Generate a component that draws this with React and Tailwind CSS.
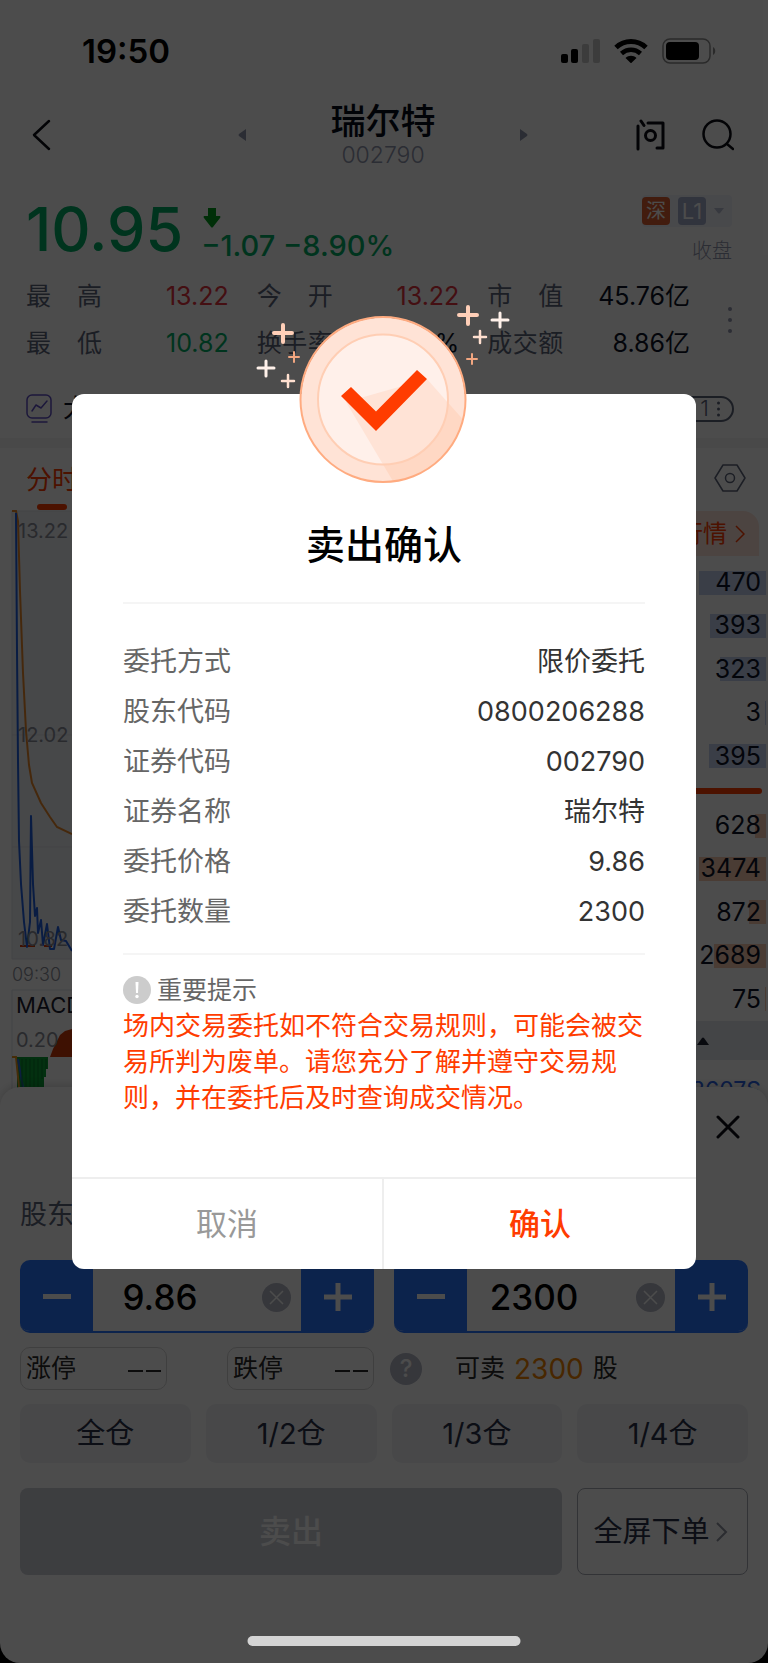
import { useState } from 'react';

const quoteStats = [
    { label: ['最', '高'], value: '13.22', color: 'text-[#e5323e]' },
    { label: ['今', '开'], value: '13.22', color: 'text-[#e5323e]' },
    { label: ['市', '值'], value: '45.76亿', color: 'text-[#0d1226]' },
    { label: ['最', '低'], value: '10.82', color: 'text-[#00ad65]' },
    { label: ['换', '手', '率'], value: '4.87%', color: 'text-[#0d1226]' },
    { label: ['成', '交', '额'], value: '8.86亿', color: 'text-[#0d1226]' },
];

const bids = [
    { volume: 470, bar: 67 },
    { volume: 393, bar: 56 },
    { volume: 323, bar: 46 },
    { volume: 3, bar: 1 },
    { volume: 395, bar: 57 },
];

const asks = [
    { volume: 628, bar: 11 },
    { volume: 3474, bar: 67 },
    { volume: 872, bar: 17 },
    { volume: 2689, bar: 52 },
    { volume: 75, bar: 1 },
];

const orderRows = [
    ['委托方式', '限价委托'],
    ['股东代码', '0800206288'],
    ['证券代码', '002790'],
    ['证券名称', '瑞尔特'],
    ['委托价格', '9.86'],
    ['委托数量', '2300'],
];

function StatusBar() {
    return (
        <div className="flex h-[102px] items-center justify-between pl-[82px] pr-[52px]">
            <span className="text-[33px] font-semibold leading-10 text-black">19:50</span>
            <div className="flex items-center gap-[14px]">
                <svg className="h-6 w-[39px]" viewBox="0 0 39 24">
                    <rect x="0" y="15" width="7" height="9" rx="2" />
                    <rect x="10" y="10" width="7" height="14" rx="2" />
                    <rect x="21" y="5" width="7" height="19" rx="2" fill="#c8c8c8" />
                    <rect x="32" y="0" width="7" height="24" rx="2" fill="#c8c8c8" />
                </svg>
                <svg className="h-6 w-[34px]" viewBox="0 0 34 24">
                    <path d="M2 8.5C10.500 .5 23.500 .5 32 8.500" fill="none" stroke="#000" strokeWidth="5" />
                    <path d="M7.500 14.500C13 9.500 21 9.500 26.500 14.500" fill="none" stroke="#000" strokeWidth="4.500" />
                    <path d="M11.500 19c3-3 8-3 11 0L17 24.300z" />
                </svg>
                <svg className="h-[26px] w-[54px]" viewBox="0 0 54 26">
                    <rect x="1" y="1" width="47" height="24" rx="7" fill="none" stroke="#8c8c8c" strokeWidth="1.500" />
                    <rect x="4" y="4" width="33" height="18" rx="4" />
                    <path d="M51 9c3 1.500 3 6.500 0 8z" fill="#8c8c8c" />
                </svg>
            </div>
        </div>
    );
}

function NavBar() {
    return (
        <header className="flex h-[66px] items-center justify-between pl-8 pr-[34px]">
            <button type="button" aria-label="返回" className="w-[120px]">
                <svg className="h-8 w-[19px]" viewBox="0 0 19 32" fill="none" stroke="#0a0d14" strokeWidth="2.500" strokeLinecap="round" strokeLinejoin="round">
                    <path d="M17 2 2 16l15 14" />
                </svg>
            </button>
            <div className="flex w-[290px] items-center justify-between">
                <svg className="h-3 w-2" viewBox="0 0 8 12">
                    <path d="M8 0v12L1 7q-1-1 0-2z" fill="#8f96ad" />
                </svg>
                <div className="flex flex-col items-center">
                    <h1 className="text-[35px] font-medium leading-[40px] text-[#050a18]">瑞尔特</h1>
                    <span className="text-[23px] font-light leading-7 text-[#8f96ad]">002790</span>
                </div>
                <svg className="h-3 w-2" viewBox="0 0 8 12">
                    <path d="M0 0v12l7-5q1-1 0-2z" fill="#8f96ad" />
                </svg>
            </div>
            <div className="flex w-[120px] justify-end gap-9">
                <button type="button" aria-label="问">
                    <svg className="h-8 w-[30px]" viewBox="0 0 30 32" fill="none" stroke="#0a0d14" strokeWidth="3" strokeLinecap="round" strokeLinejoin="round">
                        <path d="M2 7v23M5 2l3 4.500M12 4h15v25h-6" />
                        <circle cx="14.500" cy="16.500" r="5" />
                    </svg>
                </button>
                <button type="button" aria-label="搜索">
                    <svg className="h-8 w-8" viewBox="0 0 32 32" fill="none" stroke="#0a0d14" strokeWidth="2.500" strokeLinecap="round">
                        <circle cx="15" cy="15" r="13.500" />
                        <path d="m25 25 6 5" />
                    </svg>
                </button>
            </div>
        </header>
    );
}

function Quote() {
    return (
        <section>
            <div className="mt-[27px] flex h-[72px] items-start pl-[26px] pr-9">
                <span className="text-[61px] font-medium leading-[68px] text-[#00ad65]">10.95</span>
                <div className="ml-[18px] pt-[13px]">
                    <svg className="ml-[2px] h-5 w-[18px]" viewBox="0 0 18 20">
                        <path d="M5 0h8v8h4q1 1 0 2l-7 9q-1 1-2 0L1 10q-1-1 0-2h4z" fill="#009f1c" />
                    </svg>
                    <p className="text-[29px] font-medium leading-9 text-[#00ad65]">−1.07 −8.90%</p>
                </div>
                <div className="ml-auto flex flex-col items-end">
                    <div className="flex h-8 items-center gap-2 rounded bg-[#f2f3fa]">
                        <span className="flex h-7 w-7 items-center justify-center rounded bg-[#dc5f30] text-[20px] text-white">深</span>
                        <span className="flex h-7 w-7 items-center justify-center rounded bg-[#a4adcc] text-[22px] text-white">L1</span>
                        <svg className="mr-2 h-2 w-[10px]" viewBox="0 0 10 8">
                            <path d="M0 1h10L6 6Q5 7 4 6z" fill="#b8bfd4" />
                        </svg>
                    </div>
                    <span className="mt-[10px] text-[20px] font-light leading-7 text-[#8f96ad]">收盘</span>
                </div>
            </div>
            <div className="mt-[6px] flex items-center justify-between pl-[26px] pr-9">
                <div className="grid w-[664px] grid-cols-3 gap-x-7">
                    {quoteStats.map((item) => (
                        <div key={item.label.join('')} className="flex h-[47px] items-center justify-between">
                            <span className="flex w-[76px] justify-between text-[25px] text-[#5d647b]">
                                {item.label.map((char) => <span key={char}>{char}</span>)}
                            </span>
                            <span className={`text-[25px] ${item.color}`}>{item.value}</span>
                        </div>
                    ))}
                </div>
                <svg className="h-[26px] w-1" viewBox="0 0 4 26" fill="#8f96ad">
                    <circle cx="2" cy="2" r="2" />
                    <circle cx="2" cy="13" r="2" />
                    <circle cx="2" cy="24" r="2" />
                </svg>
            </div>
            <div className="flex h-[81px] items-center justify-between border-b-10 border-[#f4f4f4] pl-[26px] pr-[34px] pt-3">
                <div className="flex items-center gap-[11px]">
                    <svg className="h-[30px] w-[26px]" viewBox="0 0 26 30" fill="none" stroke="#5f4fc4" strokeWidth="1.500" strokeLinecap="round" strokeLinejoin="round">
                        <rect x="1" y="1" width="24" height="23" rx="5" />
                        <path d="m6 17 4-6 5 3 6-7M6 28h15" />
                    </svg>
                    <span className="text-[25px] text-[#0d1226]">大单</span>
                </div>
                <span className="flex h-[26px] w-[70px] items-center justify-end gap-2 rounded-full border-2 border-[#5d647b] pr-3 text-[22px] font-light text-[#5d647b]">
                    1
                    <svg className="h-4 w-[3px]" viewBox="0 0 3 16" fill="#5d647b">
                        <circle cx="1.500" cy="2" r="1.500" />
                        <circle cx="1.500" cy="8" r="1.500" />
                        <circle cx="1.500" cy="14" r="1.500" />
                    </svg>
                </span>
            </div>
        </section>
    );
}

function Chart() {
    return (
        <div className="relative w-[300px]">
            <svg className="h-[598px] w-[72px]" viewBox="0 509 72 598" fill="none">
                <path d="M12 510h60v448H12z" fill="#eef0f6" />
                <path d="M12 510h60M12 734h60M12 846h60M12 958h60M12 510v448M12 989h60M12 989v110" stroke="#dfe1e8" strokeWidth="1" />
                <path d="M17 1056h31v12h-2v8h-2v10h-2v13H17z" fill="#0aa136" />
                <path d="M50 1056l3-8 3-6 4-8 5-4 7-2v28z" fill="#d03a08" />
                <path d="M12 1056h4l4 40" stroke="#e8951c" strokeWidth="2" />
                <path d="M18 1058l7 40" stroke="#2a64d8" strokeWidth="2" />
                <path d="M22 1058v36M26 1058v36M30 1058v36M34 1058v36M38 1058v36M42 1058v20M46 1058v10" stroke="#077a28" strokeWidth="1" />
                <path d="M20 945h15M44 945h8" stroke="#d03a08" strokeWidth="2" />
                <path d="M12 510h4l2 10 2 70 3 82 3 58 3 34 3 18 9 20 9 14 7 10 15 7" stroke="#e8882a" strokeWidth="2" />
                <path d="M16 512l1 138 1 110 1 80 2 43 3 38 3 25 3-25 1-106 2 68 2 32 2-8 1 25 3-13 2 25 4-21 3 25h4l4-22 3 13 5 1 6 10" stroke="#1e5fe0" strokeWidth="2" strokeLinejoin="round" />
            </svg>
            <div className="absolute inset-0 text-[20px] text-[#8a8d98]">
                <span className="absolute left-[18px] top-[6px]">13.22</span>
                <span className="absolute left-[18px] top-[210px]">12.02</span>
                <span className="absolute left-[18px] top-[414px]">10.82</span>
                <span className="absolute left-3 top-[451px] text-[18px] font-light">09:30</span>
                <span className="absolute left-4 top-[479px] text-[22px] text-[#1c2030]">MACD</span>
                <span className="absolute left-4 top-[515px]">0.20</span>
            </div>
        </div>
    );
}

function BookRow({ volume, bar, color }) {
    return (
        <div className="relative flex items-center justify-end pr-[7px] text-[25px] text-[#0d1226]">
            <span className={`absolute right-[2px] h-6 ${color}`} style={{ width: bar }} />
            <span className="relative">{volume}</span>
        </div>
    );
}

function OrderBook() {
    return (
        <div className="w-[300px]">
            <div className="mr-[9px] mt-px flex h-[45px] items-center justify-end gap-2 rounded-tr-2xl bg-[#ffe3da] pr-[14px] text-[24px] text-[#ff3c00]">
                全景行情
                <svg className="h-[18px] w-[10px]" viewBox="0 0 10 18" fill="none" stroke="#ff3c00" strokeWidth="1.500">
                    <path d="m1 1 8 8-8 8" />
                </svg>
            </div>
            <div className="mt-[5px] grid h-[217px] grid-rows-5">
                {bids.map((row) => <BookRow key={row.volume} {...row} color="bg-[#c2d0ee]" />)}
            </div>
            <div className="my-[10px] mr-[6px] h-[6px] rounded-full bg-[#ff3c00]" />
            <div className="grid h-[217px] grid-rows-5">
                {asks.map((row) => <BookRow key={row.volume} {...row} color="bg-[#f8c9b0]" />)}
            </div>
            <div className="flex h-[39px] items-center bg-[#e4e7ee] pl-[229px]">
                <svg className="h-2 w-3" viewBox="0 0 12 8">
                    <path d="M0 8 5 1q1-1 2 0l5 7z" fill="#1c2030" />
                </svg>
            </div>
            <p className="mt-[13px] pr-[7px] text-right text-[23px] text-[#2a64e8]">3607S</p>
        </div>
    );
}

function Stepper({ label, value, onChange, step, digits }) {
    const change = (delta) => onChange((Number(value) + delta).toFixed(digits));

    return (
        <div className="flex h-[73px] overflow-hidden rounded-[10px] border-b-2 border-[#2a75ff]">
            <button type="button" aria-label={`减少${label}`} onClick={() => change(-step)} className="-mb-[2px] flex w-[73px] items-center justify-center bg-[#2a75ff]">
                <span className="h-[5px] w-7 bg-white" />
            </button>
            <div className="flex min-w-0 flex-1 items-center pr-[10px] pt-[3px]">
                <input
                    aria-label={label}
                    value={value}
                    onChange={(e) => onChange(e.target.value)}
                    className="mr-[35px] w-full min-w-0 flex-1 text-center text-[35px] font-medium text-black outline-none"
                />
                <button type="button" aria-label={`清空${label}`} onClick={() => onChange('')} className="flex h-[29px] w-[29px] shrink-0 items-center justify-center rounded-full bg-[#b4b8c6]">
                    <svg className="h-[15px] w-[15px]" viewBox="0 0 15 15" stroke="#fff" strokeWidth="1.500">
                        <path d="m1 1 13 13M14 1 1 14" />
                    </svg>
                </button>
            </div>
            <button type="button" aria-label={`增加${label}`} onClick={() => change(step)} className="-mb-[2px] flex w-[73px] items-center justify-center bg-[#2a75ff]">
                <svg className="h-7 w-7" viewBox="0 0 28 28" stroke="#fff" strokeWidth="5">
                    <path d="M14 0v28M0 14h28" />
                </svg>
            </button>
        </div>
    );
}

function LimitBox({ label }) {
    return (
        <button type="button" className="flex h-[43px] w-[147px] items-center justify-between rounded-[10px] border border-[#d4d4d4] px-[5px] text-[25px] text-[#2a2a2a]">
            {label}
            <span className="flex gap-[3px] pt-[5px]">
                <span className="h-[2px] w-[15px] bg-[#2a2a2a]" />
                <span className="h-[2px] w-[15px] bg-[#2a2a2a]" />
            </span>
        </button>
    );
}

function TradeSheet() {
    const [price, setPrice] = useState('9.86');
    const [amount, setAmount] = useState('2300');

    return (
        <section className="relative -mt-5 flex-1 rounded-[20px] bg-white px-5 pb-[88px] shadow-[0_-2px_8px_rgba(0,0,0,0.15)]">
            <div className="flex h-20 items-center justify-end pr-2">
                <button type="button" aria-label="关闭">
                    <svg className="h-6 w-6" viewBox="0 0 24 24" stroke="#0a0d14" strokeWidth="3" strokeLinecap="round">
                        <path d="m2 2 20 20M22 2 2 22" />
                    </svg>
                </button>
            </div>
            <p className="mt-[30px] h-[63px] text-[27px] leading-9 text-[#5d647b]">股东代码</p>

            <div className="grid grid-cols-2 gap-5">
                <Stepper label="价格" value={price} onChange={setPrice} step={0.01} digits={2} />
                <Stepper label="数量" value={amount} onChange={setAmount} step={100} digits={0} />
            </div>

            <div className="mt-[14px] flex items-center">
                <LimitBox label="涨停" />
                <div className="ml-[60px]"><LimitBox label="跌停" /></div>
                <button type="button" aria-label="帮助" className="ml-4 flex h-8 w-8 items-center justify-center rounded-full bg-[#b4b8c6] text-[24px] font-medium text-white">?</button>
                <p className="ml-[33px] flex items-center gap-[9px] text-[25px] text-[#2a2a2a]">
                    可卖
                    <span className="text-[28px] leading-8 text-[#f08200]">2300</span>
                    股
                </p>
            </div>

            <div className="mt-[14px] grid grid-cols-4 gap-x-[15px] gap-y-[25px]">
                {['全仓', '1/2仓', '1/3仓', '1/4仓'].map((item) => (
                    <button key={item} type="button" className="h-[59px] rounded-[10px] bg-[#f0f2f6] text-[29px] text-[#2a3048]">{item}</button>
                ))}
                <button type="button" className="col-span-3 h-[87px] rounded-lg bg-[#cccfd8] text-[32px] font-medium text-white">卖出</button>
                <button type="button" className="flex h-[87px] items-center justify-center gap-[6px] rounded-lg border border-[#a8abb5] pr-1 text-[29px] text-[#2a3048]">
                    全屏下单
                    <svg className="h-5 w-3" viewBox="0 0 12 20" fill="none" stroke="#9094a0" strokeWidth="2">
                        <path d="m1 1 9 9-9 9" />
                    </svg>
                </button>
            </div>
        </section>
    );
}

// Medal with the tick and the sparkles on both sides of it
function Medal() {
    return (
        <svg className="absolute -top-[94px] left-1/2 h-[194px] w-[260px] -translate-x-1/2" viewBox="254 300 260 194">
            <defs>
                <clipPath id="outer"><circle cx="383" cy="399.500" r="82" /></clipPath>
                <clipPath id="inner"><circle cx="383" cy="399.500" r="65" /></clipPath>
            </defs>
            <circle cx="383" cy="399.500" r="82" fill="#ffe3d6" />
            <path d="M346 402 397 488 490 450 427 379z" fill="#ffd8c4" clipPath="url(#outer)" />
            <circle cx="383" cy="399.500" r="65" fill="#fff0ea" />
            <path d="M346 402 397 488 490 450 427 379z" fill="#ffe3d6" clipPath="url(#inner)" />
            <circle cx="383" cy="399.500" r="65" fill="none" stroke="#ffceb4" strokeWidth="2" />
            <circle cx="383" cy="399.500" r="82.500" fill="none" stroke="#ffab80" strokeWidth="2" />
            <path d="M341 396l10-9 25 24.500 41-41.500 10 9-51 52z" fill="#ff3c00" />
            <g fill="none" strokeLinecap="round">
                <path d="M283 325v17M274 333h18M468 307v17M459 315h18" stroke="#ffcfb8" strokeWidth="4" />
                <path d="M266 361v15M258 368h16M500 313v14M492 320h16" stroke="#fff1ea" strokeWidth="3" />
                <path d="M288 375v12M282 381h12M480 331v12M474 337h12" stroke="#ffe0d0" strokeWidth="2.500" />
                <path d="M294 352v10M289 357h10M472 354v10M467 359h10" stroke="#f2a680" strokeWidth="2" />
            </g>
        </svg>
    );
}

function ConfirmDialog() {
    return (
        <div role="dialog" aria-label="卖出确认" className="relative w-full rounded-xl bg-white">
            <Medal />
            <div className="px-[51px] pb-[61px] pt-[127px]">
                <h2 className="text-center text-[39px] font-medium leading-[48px] text-black">卖出确认</h2>
                <dl className="mt-[33px] border-y-2 border-[#f5f5f5] pb-[16px] pt-[33px]">
                    {orderRows.map(([label, value]) => (
                        <div key={label} className="flex justify-between text-[27px] leading-[50px]">
                            <dt className="text-[#666]">{label}</dt>
                            <dd className="text-[#333]">{value}</dd>
                        </div>
                    ))}
                </dl>
                <div className="mt-[17px] flex items-center gap-[6px] text-[25px] leading-9 text-[#666]">
                    <svg className="h-7 w-7" viewBox="0 0 28 28">
                        <circle cx="14" cy="14" r="14" fill="#ccc" />
                        <path d="M12.500 6h3l-.5 11h-2z" fill="#fff" />
                        <circle cx="14" cy="20.500" r="1.700" fill="#fff" />
                    </svg>
                    重要提示
                </div>
                <p className="text-[26px] leading-9 text-[#ff3c00]">
                    场内交易委托如不符合交易规则，可能会被交易所判为废单。请您充分了解并遵守交易规则，并在委托后及时查询成交情况。
                </p>
            </div>
            <div className="grid h-[92px] grid-cols-2 border-t-2 border-[#eee] text-[31px]">
                <button type="button" className="border-r-2 border-[#eee] text-[#999]">取消</button>
                <button type="button" className="font-medium text-[#ff3c00]">确认</button>
            </div>
        </div>
    );
}

export default function App() {
    return (
        <div className="relative flex min-h-screen flex-col overflow-hidden bg-black font-[Inter,'Noto_Sans_CJK_SC',sans-serif]">
            <div className="h-[1107px] overflow-hidden bg-white">
                <StatusBar />
                <NavBar />
                <Quote />
                <div className="flex h-[62px] items-stretch justify-between pl-[26px] pr-[22px]">
                    <div className="flex flex-col items-center justify-end">
                        <span className="text-[26px] leading-9 text-[#ff3c00]">分时</span>
                        <span className="mt-[6px] h-[6px] w-[30px] rounded-full bg-[#ff3c00]" />
                    </div>
                    <svg className="mt-4 h-7 w-8" viewBox="0 0 32 28" fill="none" stroke="#5d647b" strokeWidth="1.500" strokeLinejoin="round">
                        <path d="M9 1h14l8 13-8 13H9L1 14z" />
                        <circle cx="16" cy="14" r="4.500" />
                    </svg>
                </div>
                <div className="flex justify-between">
                    <Chart />
                    <OrderBook />
                </div>
            </div>
            <TradeSheet />
            <div className="absolute inset-0 flex items-center justify-center bg-black/70 px-[72px]">
                <ConfirmDialog />
            </div>
            <div className="absolute bottom-[17px] left-1/2 h-[10px] w-[273px] -translate-x-1/2 rounded-full bg-[#d4d4d4]" />
        </div>
    );
}
